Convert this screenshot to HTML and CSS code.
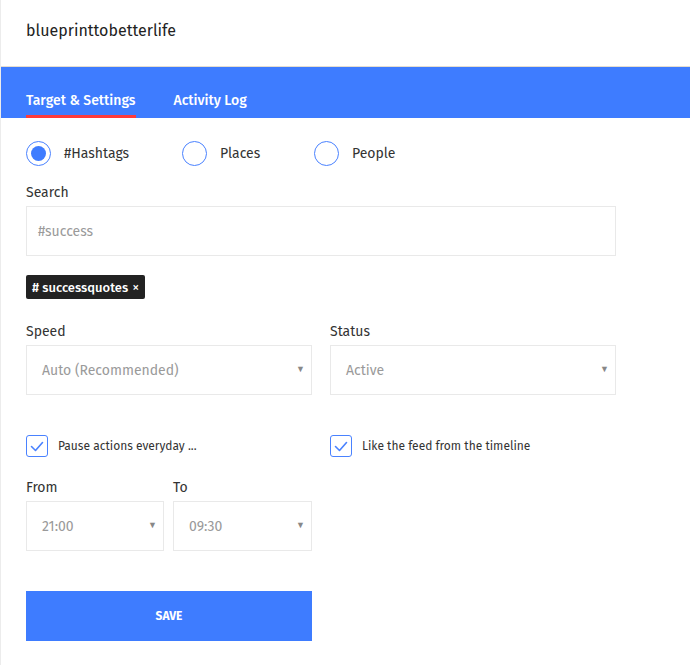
FILE: index.html
```html
<!DOCTYPE html>
<html>
<head>
<meta charset="utf-8">
<link rel="stylesheet" href="styles.css">
</head>
<body>
<div class="page">
  <header class="header">blueprinttobetterlife</header>
  <nav class="tabs">
    <span class="tab active">Target &amp; Settings</span>
    <span class="tab">Activity Log</span>
  </nav>
  <main class="content">
    <div class="radios">
      <label class="radio checked"><span class="circle"></span>#Hashtags</label>
      <label class="radio"><span class="circle"></span>Places</label>
      <label class="radio"><span class="circle"></span>People</label>
    </div>
    <div class="label search-label">Search</div>
    <div class="input">#success</div>
    <div class="tag"># successquotes <span class="x">×</span></div>
    <div class="two">
      <div>
        <div class="label">Speed</div>
        <div class="select">Auto (Recommended)<span class="arrow">▼</span></div>
      </div>
      <div>
        <div class="label">Status</div>
        <div class="select">Active<span class="arrow">▼</span></div>
      </div>
    </div>
    <div class="two checks">
      <label class="check"><span class="box"><svg width="14" height="11" viewBox="0 0 14 11"><path d="M1.5 5.5 L5.5 9.5 L12.5 1.5" fill="none" stroke="#4a82ff" stroke-width="1.6" stroke-linecap="round" stroke-linejoin="round"/></svg></span>Pause actions everyday ...</label>
      <label class="check"><span class="box"><svg width="14" height="11" viewBox="0 0 14 11"><path d="M1.5 5.5 L5.5 9.5 L12.5 1.5" fill="none" stroke="#4a82ff" stroke-width="1.6" stroke-linecap="round" stroke-linejoin="round"/></svg></span>Like the feed from the timeline</label>
    </div>
    <div class="times">
      <div>
        <div class="label">From</div>
        <div class="select">21:00<span class="arrow">▼</span></div>
      </div>
      <div>
        <div class="label">To</div>
        <div class="select">09:30<span class="arrow">▼</span></div>
      </div>
    </div>
    <button class="save">SAVE</button>
  </main>
</div>
</body>
</html>
```

FILE: styles.css
```css
* { box-sizing: border-box; }
html, body { margin: 0; padding: 0; background: #fff; }
body {
  font-family: "Fira Sans", Lato, "Open Sans", sans-serif;
  color: #222;
}
.page {
  width: 690px;
  min-height: 665px;
  border-left: 1px solid #ececec;
}
.header {
  height: 67px;
  padding: 21px 0 0 25px;
  font-size: 16px;
  color: #222;
  border-bottom: 1px solid #e5ddd0;
}
.tabs {
  background: #3e7cff;
  height: 51px;
  display: flex;
  gap: 38px;
  padding: 0 0 0 25px;
  align-items: flex-end;
}
.tab {
  color: #fff;
  font-size: 14px;
  font-weight: 500;
  line-height: 18px;
  padding-bottom: 5px;
  border-bottom: 3px solid transparent;
}
.tab.active { border-bottom-color: #ff3b3b; }
.content {
  padding: 22px 0 0 25px;
  width: 615px;
}
.radios {
  display: flex;
  height: 26px;
  align-items: center;
}
.radio {
  display: flex;
  align-items: center;
  font-size: 14px;
  color: #333;
}
.radio:nth-child(1) { width: 156px; }
.radio:nth-child(2) { width: 132px; }
.circle {
  width: 25px;
  height: 25px;
  border: 1px solid #4a82ff;
  border-radius: 50%;
  margin-right: 13px;
  display: flex;
  align-items: center;
  justify-content: center;
}
.radio.checked .circle::after {
  content: "";
  width: 15px;
  height: 15px;
  border-radius: 50%;
  background: #3e7cff;
}
.label {
  font-size: 14px;
  color: #333;
  margin-bottom: 4px;
  line-height: 18px;
}
.search-label { margin-top: 18px; }
.input {
  height: 50px;
  border: 1px solid #e9e9e9;
  padding: 0 11px;
  display: flex;
  align-items: center;
  font-size: 14px;
  color: #9a9a9a;
}
.tag {
  display: inline-flex;
  align-items: center;
  margin-top: 19px;
  height: 24px;
  padding: 0 6px;
  background: #222;
  border-radius: 2px;
  color: #fff;
  font-size: 13px;
  font-weight: 500;
}
.tag .x { margin-left: 4px; font-size: 14px; font-weight: 400; }
.two {
  display: grid;
  grid-template-columns: 286px 286px;
  gap: 18px;
  margin-top: 24px;
}
.select {
  position: relative;
  height: 50px;
  border: 1px solid #e9e9e9;
  padding: 0 15px;
  display: flex;
  align-items: center;
  font-size: 14px;
  color: #9a9a9a;
}
.arrow {
  position: absolute;
  right: 6px;
  top: 18px;
  font-size: 9px;
  color: #888;
}
.checks { margin-top: 40px; }
.check {
  display: flex;
  align-items: center;
  font-size: 12px;
  color: #333;
  height: 22px;
}
.box {
  width: 22px;
  height: 22px;
  border: 1.5px solid #4a82ff;
  border-radius: 3px;
  margin-right: 10px;
  display: flex;
  align-items: center;
  justify-content: center;
}
.times {
  display: grid;
  grid-template-columns: 138px 139px;
  gap: 9px;
  margin-top: 22px;
}
.save {
  display: block;
  margin-top: 40px;
  width: 286px;
  height: 50px;
  border: 0;
  background: #3e7cff;
  color: #fff;
  font-family: inherit;
  font-size: 12px;
  font-weight: 700;
}
```
